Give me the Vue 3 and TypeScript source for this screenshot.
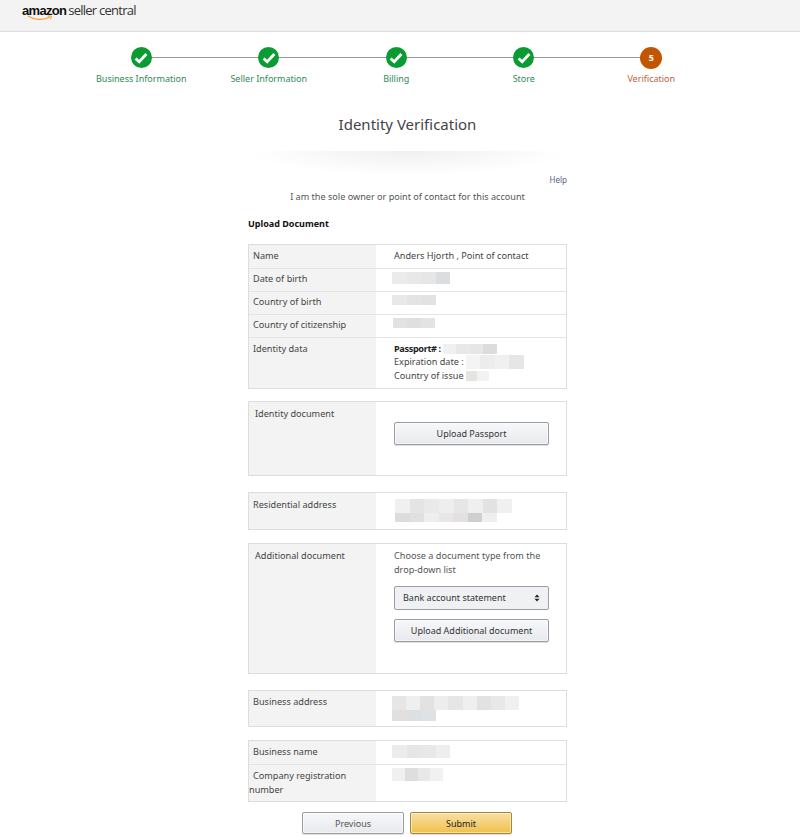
<script setup lang="ts">
interface Step {
  label: string
  done: boolean
}

interface Blur {
  width: number
  height: number
  tones: string[]
}

const steps: Step[] = [
  { label: 'Business Information', done: true },
  { label: 'Seller Information', done: true },
  { label: 'Billing', done: true },
  { label: 'Store', done: true },
  { label: 'Verification', done: false }
]

const dob: Blur = { width: 58, height: 12, tones: ['#ebebeb', '#e8e8e8', '#e6e6e6', '#dcdddf'] }
const cob: Blur = { width: 44, height: 10, tones: ['#e8e8e8', '#e4e4e4', '#e2e2e2'] }
const coc: Blur = { width: 42, height: 10, tones: ['#e2e2e2', '#dfdfdf', '#e3e3e3'] }
const passport: Blur = { width: 54, height: 10, tones: ['#f0f0f0', '#e8e8e8', '#e6e6e6', '#dcdcde'] }
const expiry: Blur = { width: 58, height: 14, tones: ['#f4f4f4', '#ececec', '#f0f0f0', '#e6e6e6'] }
const issue: Blur = { width: 23, height: 10, tones: ['#e4e4e0', '#f2f2f2'] }
const res1: Blur = { width: 117, height: 14, tones: ['#f0f0f0', '#e4e4e4', '#e9e9e9', '#eeeeee', '#e6e6e6', '#efefef', '#e2e2e2', '#f0f0f0'] }
const res2: Blur = { width: 102, height: 9, tones: ['#dcdcdc', '#e0e0e0', '#eeeeee', '#e8e6e6', '#e2e0e0', '#cfcfcf', '#efefef'] }
const bus1: Blur = { width: 127, height: 14, tones: ['#e6e6e6', '#efefef', '#e2e2e2', '#ededed', '#e6e6e6', '#efefef', '#e2e2e2', '#e8e8e8', '#f0f0f0'] }
const bus2: Blur = { width: 44, height: 11, tones: ['#e2dfdf', '#dde0e2', '#dfe2e4'] }
const name: Blur = { width: 58, height: 13, tones: ['#ececec', '#e6e6e6', '#e8e8e8', '#eeeeee'] }
const reg: Blur = { width: 51, height: 13, tones: ['#f0f0f0', '#dedede', '#e8e8e8', '#f1f1f1'] }
</script>

<template>
  <div class="page">
    <header class="top">
      <div class="logo">
        <span class="logo-amazon">amazon</span>
        <span class="logo-seller">seller central</span>
        <svg class="smile" width="26" height="6" viewBox="0 0 26 6">
          <path d="M1 1 C7 5 16 5.5 23 2" fill="none" stroke="#f0a030" stroke-width="1.3" />
          <path d="M20.5 1 L24.5 1 L23.5 4.5" fill="none" stroke="#f0a030" stroke-width="1" />
        </svg>
      </div>
    </header>

    <ol class="steps">
      <li v-for="step in steps" :key="step.label" class="step" :class="{ current: !step.done }">
        <span class="dot">
          <svg v-if="step.done" width="14" height="12" viewBox="0 0 14 12">
            <path d="M1.6 6.4 L5.2 9.8 L12.4 2" fill="none" stroke="#fff" stroke-width="2.8" />
          </svg>
          <template v-else>5</template>
        </span>
        <span class="step-label">{{ step.label }}</span>
      </li>
    </ol>

    <main class="main">
      <h1 class="title">Identity Verification</h1>
      <div class="fade"></div>

      <div class="column">
        <a class="help">Help</a>
        <p class="sole">I am the sole owner or point of contact for this account</p>
        <h2 class="upload">Upload Document</h2>

        <section class="box first">
          <div class="row r-name">
            <div class="key">Name</div>
            <div class="val">Anders Hjorth , Point of contact</div>
          </div>
          <div class="row r-short">
            <div class="key">Date of birth</div>
            <div class="val nudge">
              <span class="blur" :style="{ width: dob.width + 'px', height: dob.height + 'px' }">
                <i v-for="t in dob.tones" :key="t" :style="{ background: t }"></i>
              </span>
            </div>
          </div>
          <div class="row r-short">
            <div class="key">Country of birth</div>
            <div class="val nudge">
              <span class="blur" :style="{ width: cob.width + 'px', height: cob.height + 'px' }">
                <i v-for="t in cob.tones" :key="t" :style="{ background: t }"></i>
              </span>
            </div>
          </div>
          <div class="row r-short">
            <div class="key">Country of citizenship</div>
            <div class="val nudge coc">
              <span class="blur" :style="{ width: coc.width + 'px', height: coc.height + 'px' }">
                <i v-for="t in coc.tones" :key="t" :style="{ background: t }"></i>
              </span>
            </div>
          </div>
          <div class="row r-identity">
            <div class="key">Identity data</div>
            <div class="val lines">
              <div class="line">
                <b>Passport# :</b>
                <span class="blur" :style="{ width: passport.width + 'px', height: passport.height + 'px' }">
                  <i v-for="t in passport.tones" :key="t" :style="{ background: t }"></i>
                </span>
              </div>
              <div class="line">
                <span>Expiration date :</span>
                <span class="blur" :style="{ width: expiry.width + 'px', height: expiry.height + 'px' }">
                  <i v-for="t in expiry.tones" :key="t" :style="{ background: t }"></i>
                </span>
              </div>
              <div class="line">
                <span>Country of issue</span>
                <span class="blur" :style="{ width: issue.width + 'px', height: issue.height + 'px' }">
                  <i v-for="t in issue.tones" :key="t" :style="{ background: t }"></i>
                </span>
              </div>
            </div>
          </div>
        </section>

        <section class="box gap-12">
          <div class="row r-iddoc">
            <div class="key wide">Identity document</div>
            <div class="val doc">
              <button class="btn upload-passport" type="button">Upload Passport</button>
            </div>
          </div>
        </section>

        <section class="box gap-16">
          <div class="row r-address">
            <div class="key">Residential address</div>
            <div class="val stack">
              <span class="blur" :style="{ width: res1.width + 'px', height: res1.height + 'px' }">
                <i v-for="t in res1.tones" :key="t" :style="{ background: t }"></i>
              </span>
              <span class="blur" :style="{ width: res2.width + 'px', height: res2.height + 'px' }">
                <i v-for="t in res2.tones" :key="t" :style="{ background: t }"></i>
              </span>
            </div>
          </div>
        </section>

        <section class="box gap-13">
          <div class="row r-additional">
            <div class="key wide">Additional document</div>
            <div class="val doc2">
              <p class="choose">Choose a document type from the drop-down list</p>
              <div class="select">
                <span>Bank account statement</span>
                <svg width="6" height="8" viewBox="0 0 6 8">
                  <path d="M0.5 3.2 L3 0.4 L5.5 3.2 Z M0.5 4.8 L3 7.6 L5.5 4.8 Z" fill="#222" />
                </svg>
              </div>
              <button class="btn upload-extra" type="button">Upload Additional document</button>
            </div>
          </div>
        </section>

        <section class="box gap-16">
          <div class="row r-business">
            <div class="key">Business address</div>
            <div class="val stack tight">
              <span class="blur" :style="{ width: bus1.width + 'px', height: bus1.height + 'px' }">
                <i v-for="t in bus1.tones" :key="t" :style="{ background: t }"></i>
              </span>
              <span class="blur" :style="{ width: bus2.width + 'px', height: bus2.height + 'px' }">
                <i v-for="t in bus2.tones" :key="t" :style="{ background: t }"></i>
              </span>
            </div>
          </div>
        </section>

        <section class="box gap-13">
          <div class="row r-bname">
            <div class="key">Business name</div>
            <div class="val nudge">
              <span class="blur" :style="{ width: name.width + 'px', height: name.height + 'px' }">
                <i v-for="t in name.tones" :key="t" :style="{ background: t }"></i>
              </span>
            </div>
          </div>
          <div class="row r-reg">
            <div class="key reg-key"><span class="indent"></span>Company registration number</div>
            <div class="val nudge">
              <span class="blur" :style="{ width: reg.width + 'px', height: reg.height + 'px' }">
                <i v-for="t in reg.tones" :key="t" :style="{ background: t }"></i>
              </span>
            </div>
          </div>
        </section>

        <div class="actions">
          <button class="btn previous" type="button">Previous</button>
          <button class="btn submit" type="button">Submit</button>
        </div>
      </div>
    </main>
  </div>
</template>

<style scoped>
.page {
  width: 800px;
  height: 837px;
  overflow: hidden;
  background: #fff;
  font-family: "Noto Sans", "Open Sans", sans-serif;
  font-size: 9.15px;
  color: #444;
}

.top {
  height: 31px;
  background: #f3f3f3;
  border-bottom: 1px solid #ddd;
}

.logo {
  position: relative;
  display: flex;
  align-items: baseline;
  padding: 2px 0 0 22px;
  color: #222;
  line-height: 16px;
}

.logo-amazon {
  font-family: "Liberation Sans", sans-serif;
  font-size: 13px;
  font-weight: 700;
  letter-spacing: -0.7px;
  color: #111;
}

.logo-seller {
  margin-left: 2px;
  font-family: "Open Sans", sans-serif;
  font-size: 13px;
  letter-spacing: -0.75px;
  color: #333;
}

.smile {
  position: absolute;
  left: 27px;
  top: 15px;
}

.steps {
  display: grid;
  grid-template-columns: repeat(5, 127.5px);
  margin: 15px 0 0 77px;
  padding: 0 0 0 0.5px;
  list-style: none;
}

.step {
  position: relative;
  display: flex;
  flex-direction: column;
  align-items: center;
  gap: 4px;
  color: #2e8b57;
  font-size: 9px;
}

.step::after {
  content: "";
  position: absolute;
  left: 50%;
  top: 10px;
  width: 127.5px;
  height: 1px;
  background: #999;
}

.step:last-child::after {
  display: none;
}

.step.current {
  color: #b9663b;
}

.dot {
  position: relative;
  z-index: 1;
  display: flex;
  align-items: center;
  justify-content: center;
  width: 21px;
  height: 21px;
  border-radius: 50%;
  background: #0a9b32;
  color: #fff;
  font-weight: 700;
  font-size: 9px;
}

.current .dot {
  width: 22px;
  height: 22px;
  margin-top: -0.5px;
  margin-bottom: -0.5px;
  background: #c45500;
}

.step-label {
  line-height: 14px;
  white-space: nowrap;
}

.main {
  display: flex;
  flex-direction: column;
  align-items: center;
  padding-left: 15px;
}

.title {
  margin: 26px 0 0;
  font-size: 15px;
  line-height: 24px;
  font-weight: 400;
  color: #444;
}

.fade {
  width: 320px;
  height: 24px;
  margin-top: 15px;
  background:
    radial-gradient(ellipse 50% 100% at 50% 0, #f0f0f0 0%, rgba(255, 255, 255, 0) 100%);
}

.column {
  display: flex;
  flex-direction: column;
  width: 319px;
}

.help {
  align-self: flex-end;
  margin-top: -1px;
  font-size: 8px;
  line-height: 12px;
  color: #55608a;
}

.sole {
  margin: 4px 0 0;
  font-size: 9.1px;
  line-height: 14px;
  text-align: center;
  color: #555;
}

.upload {
  margin: 13px 0 0;
  font-size: 9px;
  line-height: 14px;
  font-weight: 700;
  color: #111;
}

.box {
  border: 1px solid #ddd;
  background: #fff;
}

.first {
  margin-top: 13px;
}

.gap-12 {
  margin-top: 12px;
}

.gap-16 {
  margin-top: 16px;
}

.gap-13 {
  margin-top: 13px;
}

.row {
  display: flex;
  border-top: 1px solid #e4e4e4;
}

.row:first-child {
  border-top: 0;
}

.key {
  flex: none;
  width: 127px;
  padding: 3px 0 0 4px;
  box-sizing: border-box;
  background: #f3f3f3;
  line-height: 14px;
  color: #444;
}

.key.wide {
  padding-left: 6px;
}

.reg-key {
  padding-left: 0;
}

.indent {
  display: inline-block;
  width: 4px;
}

.val {
  flex: 1;
  padding: 3px 0 0 18px;
  line-height: 14px;
}

.nudge {
  padding-left: 16px;
}

.coc {
  padding-left: 17px;
}

.r-name {
  height: 23px;
}

.r-name .key,
.r-name .val {
  padding-top: 4px;
}

.r-short {
  height: 22px;
}

.r-identity {
  height: 50px;
}

.r-identity .key {
  padding-top: 4px;
}

.line {
  display: flex;
  align-items: center;
  gap: 2px;
  height: 13.5px;
  white-space: nowrap;
}

.lines {
  padding-top: 4px;
}

.line b {
  letter-spacing: -0.35px;
  color: #222;
}

.blur {
  display: inline-flex;
  overflow: hidden;
  vertical-align: top;
}

.blur i {
  flex: 1;
}

.r-iddoc {
  height: 73px;
}

.r-iddoc .key {
  padding-top: 5px;
}

.doc {
  padding: 20px 0 0 18px;
}

.btn {
  display: block;
  padding: 0;
  border: 1px solid #9a9da3;
  border-radius: 2px;
  background: linear-gradient(180deg, #f7f8fa, #e7e9ec);
  box-shadow: 0 1px 0 rgba(0, 0, 0, 0.12), inset 0 0 0 1px rgba(255, 255, 255, 0.5);
  font-family: inherit;
  font-size: 9px;
  color: #333;
}

.upload-passport,
.upload-extra {
  width: 155px;
  height: 23px;
}

.r-address {
  height: 36px;
}

.r-address .key {
  padding-top: 5px;
}

.stack {
  display: flex;
  flex-direction: column;
  padding: 6px 0 0 19px;
}

.tight {
  padding: 5px 0 0 16px;
}

.r-additional {
  height: 129px;
}

.r-additional .key {
  padding-top: 5px;
}

.doc2 {
  padding-top: 5px;
}

.choose {
  margin: 0;
  width: 155px;
  line-height: 13.5px;
  color: #555;
}

.select {
  display: flex;
  align-items: center;
  justify-content: space-between;
  box-sizing: border-box;
  width: 155px;
  height: 24px;
  margin-top: 10px;
  padding: 0 8px;
  border: 1px solid #9a9da3;
  border-radius: 2px;
  background: #f0f1f2;
  font-size: 9px;
  color: #333;
}

.upload-extra {
  margin-top: 9px;
}

.r-business {
  height: 35px;
}

.r-business .key {
  padding-top: 4px;
}

.r-bname {
  height: 23px;
}

.r-bname .key {
  padding-top: 4px;
}

.r-bname .val {
  padding-top: 4px;
}

.r-reg {
  height: 36px;
}

.r-reg .key {
  padding-top: 4px;
}

.actions {
  display: flex;
  justify-content: center;
  gap: 6px;
  margin-top: 10px;
  padding-right: 1px;
}

.previous {
  width: 102px;
  height: 22px;
  color: #555;
}

.submit {
  width: 102px;
  height: 22px;
  border-color: #a88734;
  background: linear-gradient(180deg, #f7dfa5, #f0c14b);
  color: #222;
}
</style>
